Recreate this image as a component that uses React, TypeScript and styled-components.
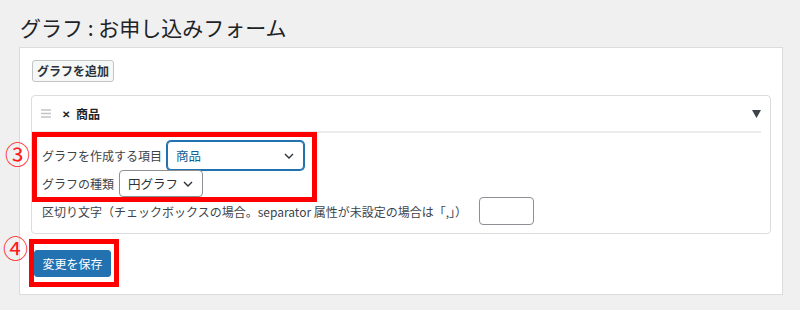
import * as React from 'react';
import styled, { createGlobalStyle } from "styled-components";

const GlobalStyle = createGlobalStyle`
      body {
            margin: 0;
            background: #f0f0f1;
            font-family: "Noto Sans CJK JP", "Noto Sans", sans-serif;
            color: #3c434a;
      }
`

const Page = styled.div`
      padding: 16px 0 0 19px;
      width: 764px;
`

const Title = styled.h1`
      margin: 0 0 8px 1px;
      font-size: 21px;
      font-weight: 400;
      line-height: 23px;
      color: #1d2327;
`

const Panel = styled.div`
      box-sizing: border-box;
      width: 764px;
      background: #fff;
      border: 1px solid #dcdcde;
      padding: 12px 11px 7px 11px;
`

const AddButton = styled.button`
      display: block;
      box-sizing: border-box;
      height: 22px;
      margin-left: 1px;
      padding: 0 4px;
      font-family: inherit;
      font-size: 12px;
      font-weight: 700;
      color: #2c3338;
      background: #f6f7f7;
      border: 1px solid #c3c4c7;
      border-radius: 3px;
      line-height: 20px;
`

const Card = styled.div`
      margin-top: 13px;
      border: 1px solid #dcdcde;
      border-radius: 4px;
      padding-bottom: 8px;
`

const CardHeader = styled.div`
      display: flex;
      align-items: center;
      height: 35px;
      margin-right: 9px;
      padding-left: 9px;
      border-bottom: 2px solid #ebebeb;
      font-size: 12px;
`

const CardTitle = styled.span`
      font-weight: 700;
      color: #1d2327;
`

const Remove = styled.span`
      margin: 0 6px 0 11px;
      font-size: 10px;
      font-weight: 700;
      color: #1d2327;
`

const Toggle = styled.svg`
      margin-left: auto;
`

const Marked = styled.div<{ $pad: string }>`
      position: relative;
      display: flex;
      flex-direction: column;
      width: fit-content;
      border: 5px solid #ff0000;
      padding: ${(p) => p.$pad};
`

const FieldBox = styled(Marked)`
      margin-top: -1px;
      margin-bottom: -5px;
`

const SaveBox = styled(Marked)`
      margin: 5px 0 0 -2px;
`

const Badge = styled.span<{ $left: number; $top: number }>`
      position: absolute;
      left: ${(p) => p.$left}px;
      top: ${(p) => p.$top}px;
      font-size: 25px;
      line-height: 1;
      color: #ff1a1a;
`

const Row = styled.div<{ $h: number }>`
      display: flex;
      align-items: center;
      gap: 5px;
      height: ${(p) => p.$h}px;
      font-size: 12px;
      white-space: nowrap;
`

const SepRow = styled(Row)`
      gap: 12px;
      padding-left: 10px;
`

const Select = styled.div<{ $w: number; $focus?: boolean }>`
      box-sizing: border-box;
      display: flex;
      align-items: center;
      justify-content: space-between;
      width: ${(p) => p.$w}px;
      height: 100%;
      padding: 0 9px 0 8px;
      font-size: 12.5px;
      border: 1px solid ${(p) => (p.$focus ? "#2271b1" : "#8c8f94")};
      box-shadow: ${(p) => (p.$focus ? "0 0 0 1px #2271b1" : "none")};
      border-radius: 4px;
      color: ${(p) => (p.$focus ? "#135e96" : "#2c3338")};
      background: #fff;
`

const TextInput = styled.div`
      box-sizing: border-box;
      width: 55px;
      height: 28px;
      border: 1px solid #8c8f94;
      border-radius: 4px;
`

const SaveButton = styled.button`
      box-sizing: border-box;
      width: 77px;
      height: 27px;
      padding: 0;
      font-family: inherit;
      font-size: 12px;
      color: #fff;
      background: #2271b1;
      border: 1px solid #2271b1;
      border-radius: 3px;
`

const Chevron = () => (
      <svg width="10" height="6" viewBox="0 0 10 6">
            <path d="M1 1l4 4l4-4" fill="none" stroke="#2c3338" strokeWidth="1.4" />
      </svg>
)

const DragHandle = () => (
      <svg width="10" height="9" viewBox="0 0 10 9">
            <path d="M0 1h10M0 4.5h10M0 8h10" stroke="#c3c4c7" strokeWidth="1.4" />
      </svg>
)

export default function App(): JSX.Element {
      return <Page>
            <GlobalStyle />
            <Title>グラフ : お申し込みフォーム</Title>
            <Panel>
                  <AddButton>グラフを追加</AddButton>
                  <Card>
                        <CardHeader>
                              <DragHandle />
                              <Remove>✕</Remove>
                              <CardTitle>商品</CardTitle>
                              <Toggle width="9" height="8" viewBox="0 0 9 8">
                                    <path d="M0 0h9L4.5 8z" fill="#3c434a" />
                              </Toggle>
                        </CardHeader>
                        <FieldBox $pad="4px 8px 0 5px">
                              <Badge $left={-32} $top={4}>③</Badge>
                              <Row $h={29}>
                                    グラフを作成する項目
                                    <Select $w={137} $focus>商品<Chevron /></Select>
                              </Row>
                              <Row $h={27}>
                                    グラフの種類
                                    <Select $w={84}>円グラフ<Chevron /></Select>
                              </Row>
                        </FieldBox>
                        <SepRow $h={28}>
                              区切り文字（チェックボックスの場合。separator 属性が未設定の場合は「,」）
                              <TextInput />
                        </SepRow>
                  </Card>
                  <SaveBox $pad="6px 3px 5px 0">
                        <Badge $left={-31} $top={-9}>④</Badge>
                        <SaveButton>変更を保存</SaveButton>
                  </SaveBox>
            </Panel>
      </Page>
}
